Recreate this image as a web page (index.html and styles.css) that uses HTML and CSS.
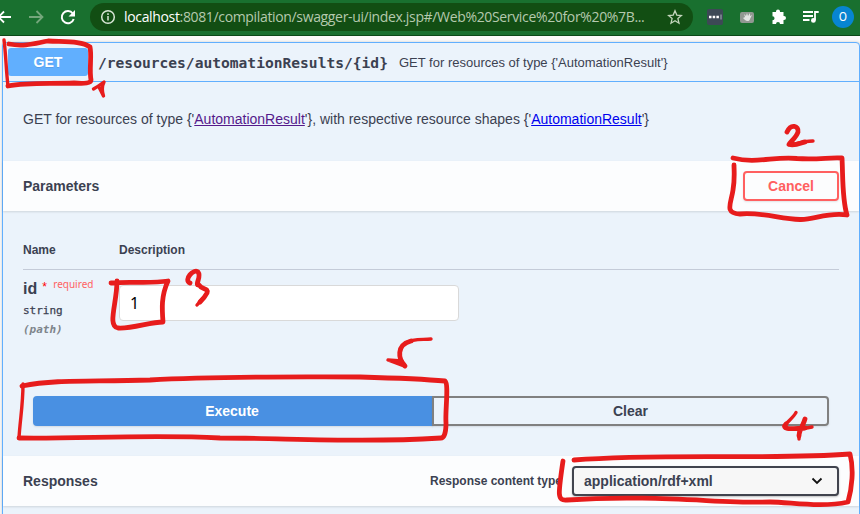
FILE: index.html
```html
<!DOCTYPE html>
<html lang="en">
<head>
<meta charset="utf-8">
<title>Swagger UI</title>
<link rel="stylesheet" href="styles.css">
</head>
<body>
<header class="browser">
  <svg class="nav" width="90" height="35" viewBox="0 0 90 35" fill="none" stroke-width="1.8">
    <path d="M11 17H0M4 11.500L-1.500 17l5.500 5.500" stroke="#fff"/>
    <path d="M29 17h13M36.500 11l6 6-6 6" stroke="#75a77c"/>
    <path d="M72.800 13.500A6.100 6.100 0 1 0 73.700 19" stroke="#fff" stroke-width="2"/>
    <path d="M75 10v6.500h-6.500z" fill="#fff"/>
  </svg>
  <div class="address">
    <svg class="info" width="16" height="16" viewBox="0 0 16 16" fill="none" stroke="#d8e6d5" stroke-width="1.5"><circle cx="8" cy="8" r="6.300"/><path d="M8 7v4.500M8 4.300v1.600"/></svg>
    <span class="url"><b>localhost</b>:8081/compilation/swagger-ui/index.jsp#/Web%20Service%20for%20%7B...</span>
    <svg class="star" width="16" height="16" viewBox="0 0 16 16" fill="none" stroke="#c4d6bd" stroke-width="1.300"><path d="M8 1.800l1.800 4.300 4.600.4-3.500 3.100 1.100 4.600L8 11.800l-4 2.400 1.100-4.600-3.500-3.100 4.600-.4z"/></svg>
  </div>
  <svg class="tools" width="127" height="35" viewBox="0 0 127 35">
    <rect x="2" y="9" width="16" height="16" rx="2" fill="#3d4956"/>
    <path d="M4 17h2.500M7.700 17h2.500M11.400 17h2.500" stroke="#fff" stroke-width="2.500"/><path d="M16 14.500v5" stroke="#aab3bb"/>
    <rect x="35" y="12" width="14" height="11" rx="2" fill="#919892"/>
    <path d="M39 14l1 3-2 1 2 2c2 2 5 1 5-1l2-4-2 1V13l-2 3-1-3-1 3z" fill="#e2e4e2"/>
    <path d="M67.500 12H71v-.5a2 2 0 0 1 4 0v.5h3.500v4h.5a2 2 0 0 1 0 4h-.5v4H75a2 2 0 0 0-4 0h-3.500v-3.700a2 2 0 0 0 0-4.100V12z" fill="#fff"/>
    <path d="M98 12h10M98 16h10M98 20h6.500" stroke="#fff" stroke-width="1.800"/><circle cx="108.400" cy="20.400" r="2.400" fill="#fff"/><path d="M110 20v-8h3.700" fill="none" stroke="#fff" stroke-width="1.800"/>
  </svg>
  <span class="avatar">O</span>
</header>

<main class="operation">
  <div class="summary">
    <span class="method">GET</span>
    <span class="route">/resources/automationResults/{id}</span>
    <span class="brief">GET for resources of type {'AutomationResult'}</span>
  </div>
  <p class="description"><span>GET for resources of type {'<a class="visited" href="#">AutomationResult</a>'}, with respective resource shapes {'<a href="#">AutomationResult</a>'}</span></p>
  <div class="section-header">
    <h4>Parameters</h4>
    <button class="cancel">Cancel</button>
  </div>
  <div class="parameters">
    <div class="row head"><span>Name</span><span>Description</span></div>
    <div class="row">
      <div class="param">
        <div class="name">id<span class="mark">*</span><span class="required">required</span></div>
        <div class="type">string</div>
        <div class="place">(path)</div>
      </div>
      <input class="value" type="text" value="1">
    </div>
  </div>
  <div class="actions">
    <button class="execute">Execute</button>
    <button class="clear">Clear</button>
  </div>
  <div class="section-header responses">
    <h4>Responses</h4>
    <span class="content-label">Response content type</span>
    <div class="select">application/rdf+xml<svg width="12" height="8" viewBox="0 0 12 8" fill="none" stroke="#111" stroke-width="1.800"><path d="M1.500 1.500L6 6l4.500-4.500"/></svg></div>
  </div>
</main>

<svg class="ink" width="860" height="514" viewBox="0 0 860 514">
  <path class="fine" d="M4 40C6 55 6 70 8 86"/>
  <path d="M8 86C28 82 48 84 74 83C85 84 91 83 91 80C89 69 92 56 90 47C82 41 66 42 48 41C36 43 25 47 9 44"/>
  <path class="fine" d="M93.500 89C97 87 100 85 104 82Q101 88 103.500 96L99 87"/>
  <path d="M733 158C756 164 775 156 797 158.500C818 160 830 157 842 158C843 176 842 199 847 215C827 212 814 220 800 219.500C780 219 762 212 740 214C724 213 731 204 733 190C735 178 734 171 734 165"/>
  <path d="M787 132C791 123 799 126 798 132C796 138 790 142 789 144.500C797 146 802 142 805 142"/>
  <path class="fine" d="M795 144C802 142 808 141 813 141"/>
  <path d="M111 283C130 281 149 284 168 281C161 296 162 309 163 322C150 322 132 329 118 328C107 326 117 303 117 281"/>
  <path d="M190 283C183 280 194 268 198 272C202 277 194 285 199 285C202 290 209 288 207 293C205 297 202 300 200 302"/>
  <path class="fine" d="M203 298L197 305"/>
  <path d="M22 386C57 379 90 382 150 380C220 376 290 377 360 377C395 378 423 379 445 381C449 384 445 412 446 423C446 433 444 438 441 438C360 443 285 438 220 438C150 434 80 439 19 438"/>
  <path class="fine" d="M19 438C20 420 23 405 23 384"/>
  <path class="fine" d="M431 339C423 340 413 338 406 343"/>
  <path d="M411 341C396 345 398 359 405 366"/>
  <path class="fine" d="M404 366L388 360L402 361"/>
  <path d="M563 461C558 495 557 501 567 500C655 494 725 504 770 502C790 502 821 508 848 502C852 488 854 469 850 454C770 460 665 453 574 460"/>
  <path class="fine" d="M796 412.500C793 418 788 421 784 426"/>
  <path d="M786 424C780 431 796 428 805 428M805 419C803 426 799 430 799 436"/>
  <path class="fine" d="M801 429L812 427M799 432V439"/>
</svg>
</body>
</html>
```
FILE: styles.css
```css
* { box-sizing: border-box; }
body { margin: 0; width: 860px; height: 514px; overflow: hidden; background: #fafafa; color: #3b4151; font-family: "Liberation Sans", Arial, sans-serif; }
.browser { height: 36px; display: flex; align-items: flex-start; background: #19702f; border-bottom: 1px solid #0b4918; }
.nav { flex: 0 0 90px; }
.address { flex: none; width: 603px; height: 28px; margin-top: 3px; padding: 0 10px; display: flex; align-items: center; background: #124e13; border-radius: 14px; color: #b5c9ae; }
.url { flex: none; width: 533px; margin-left: 8px; font: 14px/20px "Open Sans", sans-serif; letter-spacing: -.345px; white-space: nowrap; }
.url b { color: #fff; font-weight: 400; }
.info, .star { flex: none; }
.star { margin-left: 10px; }
.tools { flex: none; margin-left: 12px; }
.avatar { flex: none; width: 22px; height: 22px; margin: 6px 0 0 0; border-radius: 50%; background: #0785d1; color: #fff; text-align: center; font: 12px/22px Roboto, sans-serif; }

.operation { width: 858px; height: 480px; margin: 6px 0 0 2px; border: 1px solid #61affe; border-radius: 4px; background: #ebf3fb; box-shadow: 0 0 3px rgba(0,0,0,.19); }
.summary { height: 39px; padding: 5px; border-bottom: 1px solid #61affe; display: flex; align-items: center; white-space: nowrap; }
.method { width: 80px; height: 28px; border-radius: 3px; background: #61affe; color: #fff; font-size: 14px; line-height: 28px; font-weight: 700; text-align: center; text-shadow: 0 1px 0 rgba(0,0,0,.1); }
.route { width: 291px; margin: 2px 0 0 10px; font: 700 14.6px/20px "DejaVu Sans Mono", monospace; }
.brief { margin-left: 10px; font-size: 13px; }
.description { height: 79px; margin: 0; padding: 29px 20px; font-size: 14px; line-height: 16px; white-space: nowrap; }
a { color: #0000ee; }
.visited { color: #551a8b; }
.section-header { height: 50px; padding: 0 20px; display: flex; align-items: center; background: #fcfdfe; box-shadow: 0 1px 2px rgba(0,0,0,.12); }
h4 { flex: 1; margin: 0; font-size: 14px; line-height: 16px; }
button { height: 30px; margin: 0; border: 2px solid gray; background: transparent; border-radius: 4px; font: 700 14px/16px "Liberation Sans", Arial, sans-serif; color: #3b4151; box-shadow: 0 1px 2px rgba(0,0,0,.1); }
.cancel { width: 96px; border-color: #ff6060; color: #ff6060; }
.parameters { height: 185px; padding: 20px 20px 0; }
.row { display: grid; grid-template-columns: 96px 340px; }
.row.head { height: 39px; padding-top: 12px; border-bottom: 1px solid #c4cbd8; font-size: 12px; line-height: 14px; font-weight: 700; }
.param { padding-top: 10px; }
.name { height: 18px; font-size: 16px; line-height: 18px; font-weight: 700; display: flex; align-items: flex-start; }
.mark { width: 7px; margin-left: 5px; font-size: 12px; line-height: 15px; font-weight: 400; color: #f00; }
.required { margin: -2px 0 0 4px; font: 10px/12px "Noto Sans", sans-serif; color: #ff6262; }
.type, .place { font: 700 11px/14px "DejaVu Sans Mono", monospace; }
.type { margin-top: 6px; font-weight: 400; -webkit-text-stroke: .25px #3b4151; }
.place { margin-top: 5px; color: #7e858b; font-style: italic; }
.value { width: 340px; height: 36px; margin: 15px 0 0; padding: 0 10px; border: 1px solid #d9d9d9; border-radius: 4px; background: #fff; color: #000; font: 16px "Noto Sans", sans-serif; }
.actions { height: 60px; padding: 0 30px; display: flex; }
.execute { width: 400px; padding: 0 8px 0 6px; border-color: #4990e2; background: #4990e2; color: #fff; border-radius: 4px 0 0 4px; }
.clear { flex: 1; margin-left: -1px; border-radius: 0 4px 4px 0; }
.content-label { margin-right: 10px; font-size: 12px; font-weight: 700; }
.select { width: 267px; height: 30px; padding: 0 14px 0 10px; display: flex; justify-content: space-between; align-items: center; border: 2px solid #41444e; border-radius: 4px; background: #f7f7f7; box-shadow: 0 1px 2px rgba(0,0,0,.25); font-size: 14px; font-weight: 700; }
.ink { position: absolute; inset: 0; pointer-events: none; fill: none; stroke: #e71c1c; stroke-width: 4.8; stroke-linecap: round; stroke-linejoin: round; }
.ink .fine { stroke-width: 3.4; }
```
